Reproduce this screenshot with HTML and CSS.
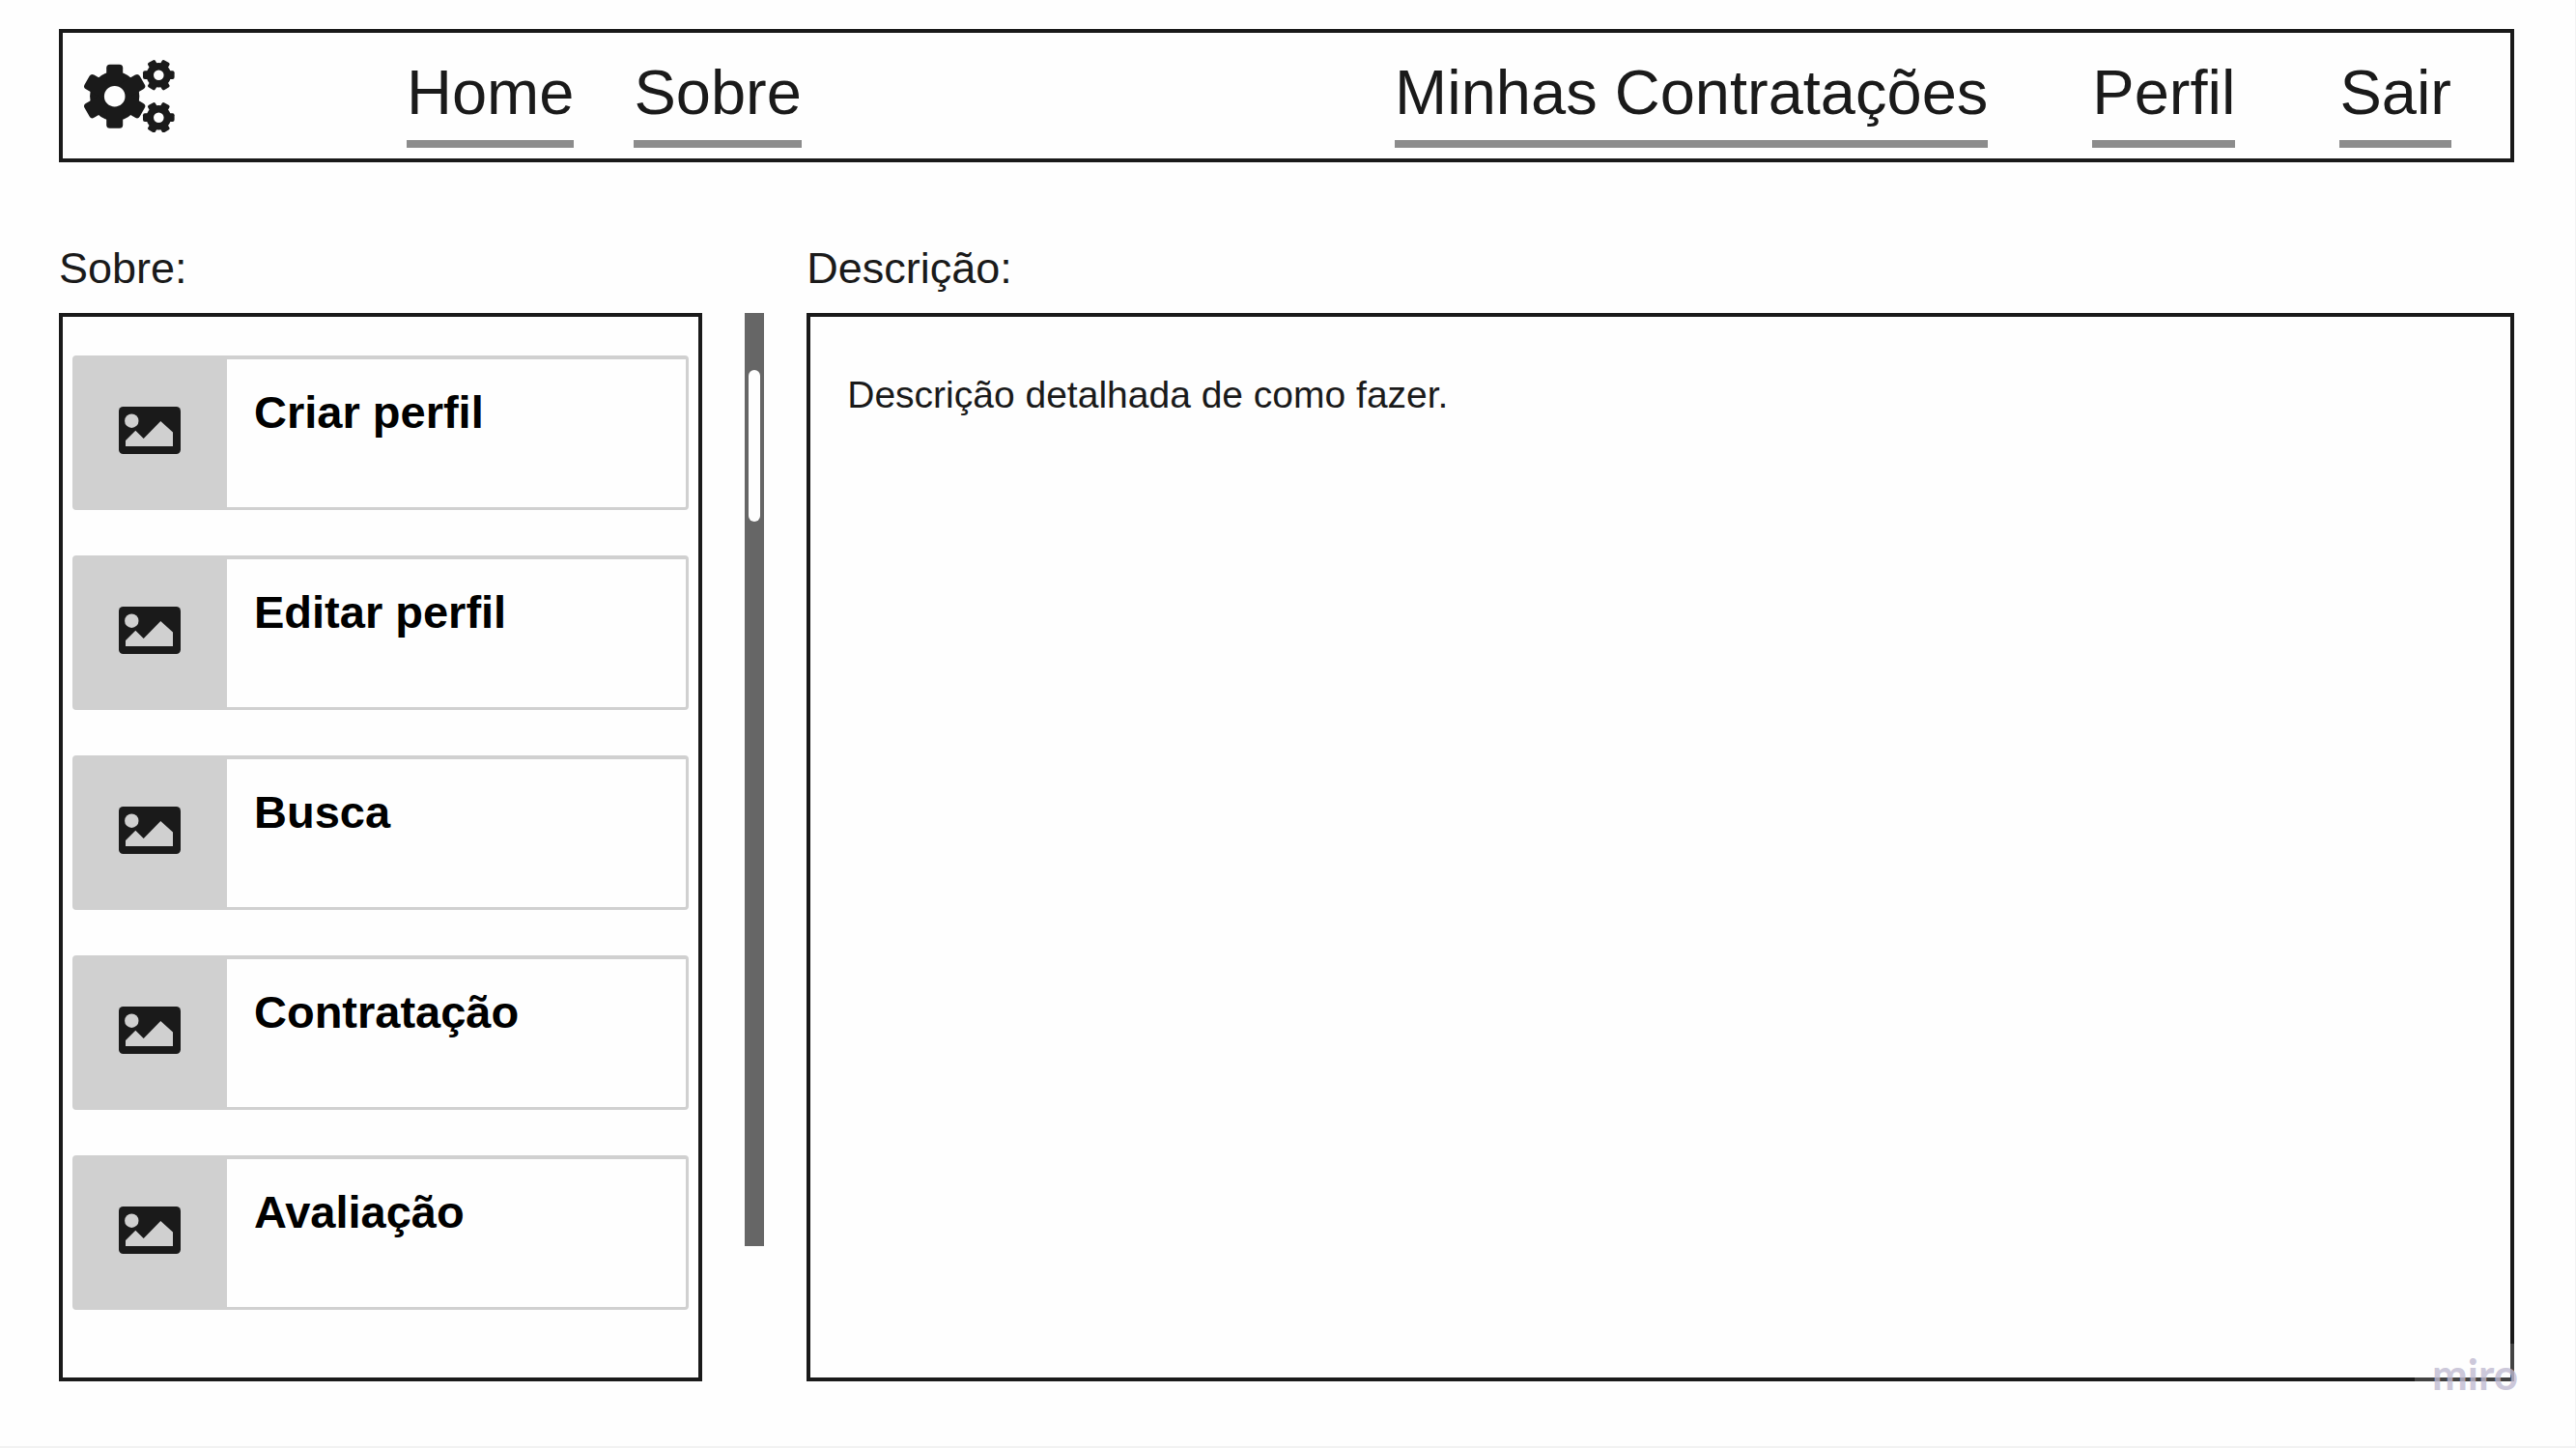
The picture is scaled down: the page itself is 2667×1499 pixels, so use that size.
FILE: index.html
```html
<!DOCTYPE html>
<html lang="pt-BR">
<head>
<meta charset="utf-8">
<meta name="viewport" content="width=device-width, initial-scale=1">
<title>Sobre</title>
<link rel="stylesheet" href="styles.css">
</head>
<body>
<svg class="symbols" aria-hidden="true">
  <symbol id="picture" viewBox="0 0 64 49">
    <rect width="64" height="49" rx="4.5" fill="#1a1a1a"/>
    <circle cx="13.3" cy="14.7" r="7.2" fill="#d0d0d0"/>
    <path d="M7 35 17.3 24.7 25.7 33 43.3 15 56 26.5V41H7Z" fill="#d0d0d0"/>
  </symbol>
</svg>

<header class="topbar">
  <svg class="logo" viewBox="0 0 94 75" role="img" aria-label="Engrenagens">
    <defs>
      <g id="small-gear">
        <circle r="12.7"/>
        <rect x="-16.3" y="-4.4" width="32.6" height="8.8" rx="2"/>
        <rect x="-16.3" y="-4.4" width="32.6" height="8.8" rx="2" transform="rotate(60)"/>
        <rect x="-16.3" y="-4.4" width="32.6" height="8.8" rx="2" transform="rotate(120)"/>
        <circle r="5.3" fill="#fefefe"/>
      </g>
    </defs>
    <g fill="#1a1a1a">
      <g transform="translate(31.7 37.7)">
        <circle r="25.6"/>
        <rect x="-8.5" y="-33" width="17" height="66" rx="3.5"/>
        <rect x="-8.5" y="-33" width="17" height="66" rx="3.5" transform="rotate(60)"/>
        <rect x="-8.5" y="-33" width="17" height="66" rx="3.5" transform="rotate(120)"/>
        <circle r="10.8" fill="#fefefe"/>
      </g>
      <use href="#small-gear" x="77.3" y="15.7"/>
      <use href="#small-gear" x="77.3" y="59.7"/>
    </g>
  </svg>
  <nav class="nav">
    <div class="nav-main">
      <a href="#home">Home</a>
      <a href="#sobre">Sobre</a>
    </div>
    <div class="nav-user">
      <a href="#contratacoes">Minhas Contratações</a>
      <a href="#perfil">Perfil</a>
      <a href="#sair">Sair</a>
    </div>
  </nav>
</header>

<main class="content">
  <h2 class="label label-topics" id="sobre">Sobre:</h2>
  <h2 class="label label-description" id="descricao">Descrição:</h2>

  <ul class="panel topics" aria-labelledby="sobre">
    <li><a class="topic" href="#criar"><span class="thumb"><svg><use href="#picture"/></svg></span><span class="title">Criar perfil</span></a></li>
    <li><a class="topic" href="#editar"><span class="thumb"><svg><use href="#picture"/></svg></span><span class="title">Editar perfil</span></a></li>
    <li><a class="topic" href="#busca"><span class="thumb"><svg><use href="#picture"/></svg></span><span class="title">Busca</span></a></li>
    <li><a class="topic" href="#contratacao"><span class="thumb"><svg><use href="#picture"/></svg></span><span class="title">Contratação</span></a></li>
    <li><a class="topic" href="#avaliacao"><span class="thumb"><svg><use href="#picture"/></svg></span><span class="title">Avaliação</span></a></li>
  </ul>

  <div class="scrollbar" aria-hidden="true"><div class="scroll-thumb"></div></div>

  <section class="panel description" aria-labelledby="descricao">
    <p>Descrição detalhada de como fazer.</p>
  </section>
</main>

<div class="watermark">miro</div>
</body>
</html>
```

FILE: styles.css
```css
* {
  box-sizing: border-box;
}

body {
  position: relative;
  display: flex;
  flex-direction: column;
  min-height: 100vh;
  margin: 0;
  padding: 30px 63px 67px 61px;
  border: solid #f2f2f2;
  border-width: 0 1px 2px 0;
  background: #fefefe;
  color: #1a1a1a;
  font-family: "Liberation Sans", Arial, sans-serif;
}

.symbols {
  position: absolute;
  width: 0;
  height: 0;
}

/* Top bar */
.topbar {
  display: flex;
  align-items: flex-start;
  gap: 240px;
  padding: 24px 61px 11px 22px;
  border: 4px solid #1a1a1a;
}

.logo {
  flex: none;
  width: 94px;
  height: 75px;
  margin-top: 4px;
}

.nav {
  display: flex;
  flex: 1;
  justify-content: space-between;
}

.nav-main,
.nav-user {
  display: flex;
  gap: 62px;
}

.nav-user {
  gap: 108px;
}

.nav a {
  padding-bottom: 12px;
  border-bottom: 8px solid #8c8c8c;
  color: inherit;
  font-size: 65px;
  line-height: 75px;
  text-decoration: none;
  white-space: nowrap;
}

/* Content */
.content {
  display: grid;
  flex: 1;
  grid-template-columns: 666fr 20px 1767fr;
  grid-template-rows: auto 1fr;
  column-gap: 44px;
  margin-top: 84px;
}

.label {
  margin: 0 0 20px;
  font-size: 45px;
  font-weight: 400;
  line-height: 52px;
}

.label-description {
  grid-column: 3;
}

.panel {
  border: 4px solid #1a1a1a;
}

.topics {
  display: flex;
  flex-direction: column;
  gap: 47px;
  margin: 0;
  padding: 40px 10px;
  list-style: none;
}

.topic {
  display: flex;
  height: 160px;
  border: 3px solid #d0d0d0;
  border-top-width: 4px;
  border-radius: 4px;
  color: #000;
  text-decoration: none;
}

.thumb {
  flex: none;
  padding: 49px 48px 0 45px;
  background: #d0d0d0;
}

.thumb svg {
  display: block;
  width: 64px;
  height: 49px;
}

.title {
  padding: 28px;
  font-size: 47px;
  font-weight: 700;
  line-height: 54px;
}

.scrollbar {
  margin-bottom: 140px;
  padding: 59px 4px;
  background: #666;
}

.scroll-thumb {
  height: 157px;
  border-radius: 6px;
  background: #fefefe;
}

.description {
  padding: 58px 38px;
}

.description p {
  margin: 0;
  font-size: 39px;
  line-height: 46px;
}

/* Board watermark laid over the lower right corner */
.watermark {
  position: absolute;
  right: 41px;
  bottom: 44px;
  padding: 0 18px;
  background: rgba(255, 255, 255, 0.18);
  color: rgba(190, 185, 208, 0.8);
  font-family: Lato, sans-serif;
  font-size: 44px;
  font-weight: 700;
  line-height: 62px;
}
```
